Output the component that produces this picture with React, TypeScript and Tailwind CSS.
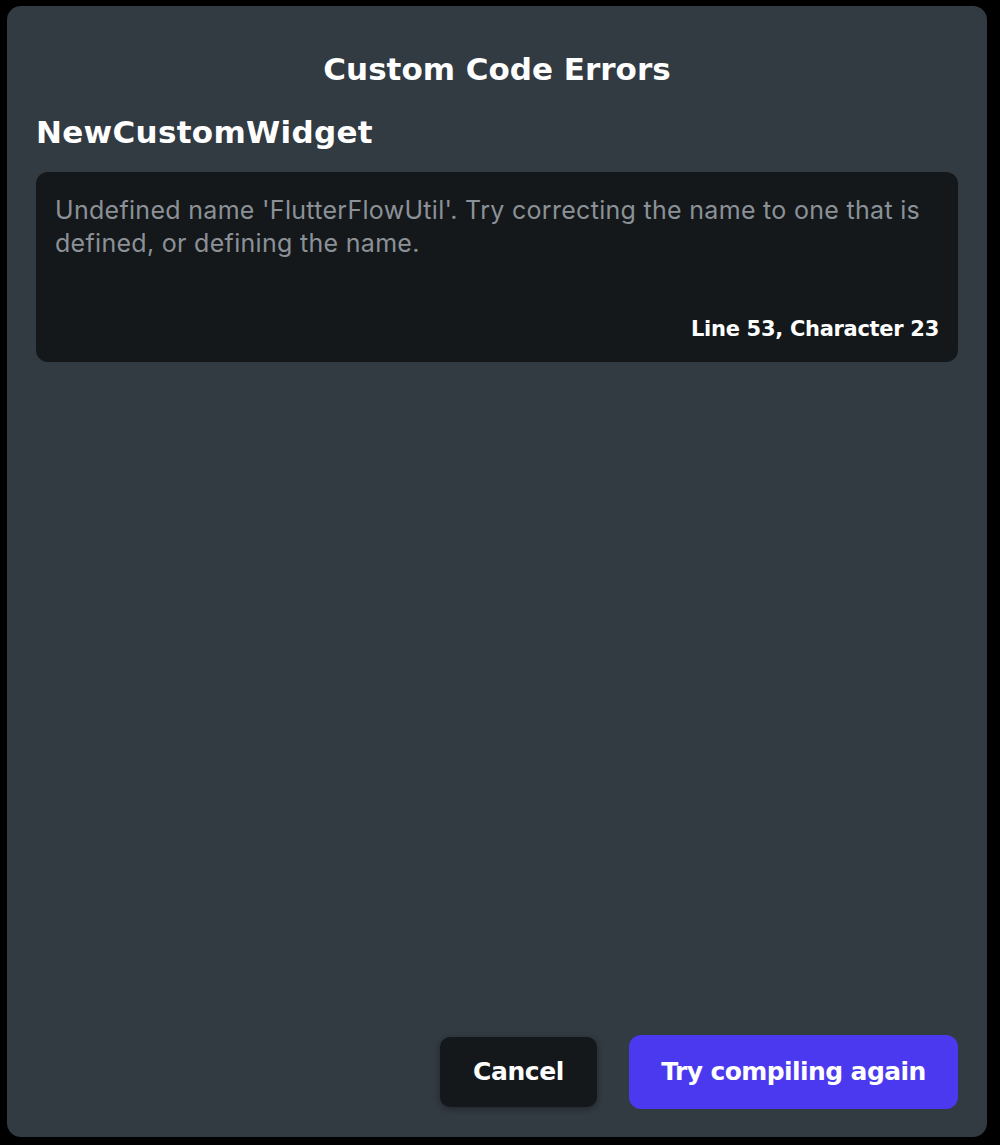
import React from "react";

export default function App() {
  return (
    <div className="w-[1000px] h-[1145px] bg-black pl-[7px] pt-[6px] font-[Inter,'Open_Sans',sans-serif]">
      <div className="w-[980px] h-[1131px] bg-[#323a42] rounded-[14px] flex flex-col px-[29px]">
        <h1 className="text-center text-white font-bold font-['DejaVu_Sans',Inter,sans-serif] text-[31px] leading-none pt-[48px]">
          Custom Code Errors
        </h1>
        <h2 className="text-white font-bold font-['DejaVu_Sans',Inter,sans-serif] text-[31px] leading-none mt-[32px] tracking-[0.3px]">
          NewCustomWidget
        </h2>
        <div className="mt-[24px] h-[190px] bg-[#14181b] rounded-[12px] px-[19px] pt-[22px] pb-[22px] flex flex-col justify-between">
          <p className="text-[#8b9197] text-[25px] leading-[33px] tracking-[0.3px]">
            Undefined name 'FlutterFlowUtil'. Try correcting the name to one that is defined, or defining the name.
          </p>
          <p className="text-right text-white font-bold font-['DejaVu_Sans',Inter,sans-serif] text-[21px] leading-none tracking-[-0.3px]">
            Line 53, Character 23
          </p>
        </div>
        <div className="flex-1" />
        <div className="flex justify-end items-center gap-[32px] pb-[28px]">
          <button className="w-[157px] h-[70px] rounded-[10px] bg-[#14181b] text-white font-bold font-['DejaVu_Sans',Inter,sans-serif] text-[25px] tracking-[-0.4px] shadow-[0_2px_6px_rgba(0,0,0,0.35)]">
            Cancel
          </button>
          <button className="w-[329px] h-[74px] rounded-[12px] bg-[#4b39ef] text-white font-bold font-['DejaVu_Sans',Inter,sans-serif] text-[25px] tracking-[-0.6px]">
            Try compiling again
          </button>
        </div>
      </div>
    </div>
  );
}
